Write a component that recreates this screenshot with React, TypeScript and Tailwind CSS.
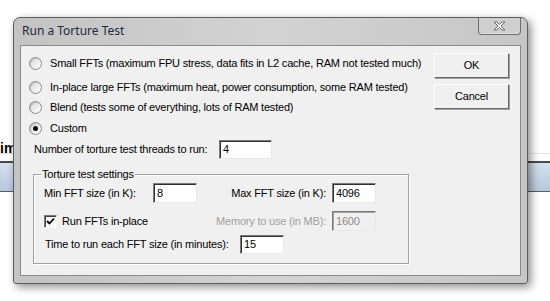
import React from "react";

const font = { fontFamily: '"Liberation Sans", Arial, sans-serif' };

const Radio: React.FC<{ checked?: boolean; label: string }> = ({ checked, label }) => (
  <label className="flex items-center h-[20px]">
    <span className="ml-[8px] w-[13px] h-[13px] rounded-full border border-[#8b8b8b] bg-gradient-to-br from-[#d9d9d9] to-white flex items-center justify-center shadow-[inset_1px_1px_1px_rgba(0,0,0,0.15)]">
      {checked && <span className="w-[5px] h-[5px] rounded-full bg-[#111]" />}
    </span>
    <span className="ml-[8px] text-[11px] text-black whitespace-nowrap">{label}</span>
  </label>
);

const Field: React.FC<{ value: string; disabled?: boolean; w?: string }> = ({ value, disabled, w }) => (
  <div
    className={`${w ?? "w-[44px]"} h-full border border-t-[#7a7a7a] border-l-[#7a7a7a] border-b-[#e8e8e8] border-r-[#e8e8e8] pl-[3px] flex items-center text-[11px] ${
      disabled ? "bg-[#f0f0f0] text-[#8c8c8c] shadow-[inset_1px_1px_0_#a0a0a0]" : "bg-white text-black shadow-[inset_1px_1px_0_#303030]"
    }`}
  >
    {value}
  </div>
);

const Button: React.FC<{ label: string }> = ({ label }) => (
  <button className="w-[75px] h-[25px] bg-[#f0f0f0] border border-t-white border-l-white border-r-[#696969] border-b-[#696969] shadow-[1px_1px_0_#a0a0a0] text-[11px] text-black flex items-center justify-center">
    {label}
  </button>
);

const CloseButton = () => (
  <div className="shrink-0 w-[43px] h-[17px] mr-[6px] rounded-b-[4px] border-x border-b border-[#6e6e6e] bg-[#cfcfcf] shadow-[inset_0_-1px_0_#e4e4e4] flex items-center justify-center">
    <svg width="13" height="10" viewBox="0 0 13 10" className="block">
      <path
        d="M1 1 H4 L6.5 3.5 L9 1 H12 L8 5 L12 9 H9 L6.5 6.5 L4 9 H1 L5 5 Z"
        fill="#f4f4f4"
        stroke="#6a6a6a"
        strokeWidth="1"
        strokeLinejoin="round"
      />
    </svg>
  </div>
);

export default function App() {
  return (
    <div className="relative w-[550px] h-[301px] bg-white overflow-hidden tracking-[-0.2px]" style={font}>
      {/* desktop content behind the dialog */}
      <div className="absolute left-0 top-[140px] text-[14px] font-bold text-black leading-[17px] tracking-normal">im</div>
      <div className="absolute left-0 right-0 top-[153px] h-[1px] bg-[#dbe5f0]" />
      <div className="absolute left-0 right-0 top-[161px] h-[31px] border-t-2 border-b border-t-[#4a4a4a] border-b-[#5c5c5c] bg-gradient-to-b from-[#d4e0ed] to-[#b7c8dc]" />

      {/* dialog window */}
      <div className="absolute left-[13px] top-[17px] w-[515px] h-[267px] rounded-t-[7px] rounded-b-[3px] border border-[#5d5d5d] bg-gradient-to-r from-[#c3c3c3] via-[#d3d3d3] to-[#c6c6c6] shadow-[3px_3px_8px_rgba(0,0,0,0.45)] flex flex-col">
        <div className="h-[27px] shrink-0 flex flex-row justify-between items-start">
          <span
            className="ml-[8px] mt-[5px] text-[12px] leading-[16px] text-[#1c2b3e] tracking-normal"
            style={{ fontFamily: '"Noto Sans", "Open Sans", sans-serif' }}
          >
            Run a Torture Test
          </span>
          <CloseButton />
        </div>

        <div className="flex-1 mx-[6px] mb-[7px] border border-[#8a8a8a] bg-[#f0f0f0] flex">
          <div className="flex-1 flex flex-col pt-[7px]">
            <Radio label="Small FFTs (maximum FPU stress, data fits in L2 cache, RAM not tested much)" />
            <div className="mt-[4px]">
              <Radio label="In-place large FFTs (maximum heat, power consumption, some RAM tested)" />
            </div>
            <Radio label="Blend (tests some of everything, lots of RAM tested)" />
            <div className="mt-[1px]">
              <Radio checked label="Custom" />
            </div>
            <div className="mt-[1px] h-[20px] flex items-center">
              <span className="ml-[13px] w-[185px] text-[11px] text-black whitespace-nowrap">
                Number of torture test threads to run:
              </span>
              <div className="h-[19px]">
                <Field value="4" w="w-[53px]" />
              </div>
            </div>

            <div className="relative mt-[15px] ml-[12px] w-[376px] h-[90px] border border-[#a0a0a0] shadow-[inset_1px_1px_0_#fff,1px_1px_0_#fff]">
              <span className="absolute left-[7px] top-[-8px] px-[1px] bg-[#f0f0f0] text-[11px] text-black leading-[14px]">
                Torture test settings
              </span>
              <div className="mt-[8px] grid grid-cols-[10px_109px_44px_135px_44px] grid-rows-[20px_20px] gap-y-[8px] text-[11px] text-black">
                <div />
                <div className="flex items-center whitespace-nowrap">Min FFT size (in K):</div>
                <Field value="8" />
                <div className="flex items-center justify-end pr-[6px] whitespace-nowrap">Max FFT size (in K):</div>
                <Field value="4096" />

                <div />
                <div className="col-span-2 flex items-center whitespace-nowrap">
                  <span className="w-[13px] h-[13px] bg-white border border-t-[#7a7a7a] border-l-[#7a7a7a] border-b-[#f4f4f4] border-r-[#f4f4f4] shadow-[inset_1px_1px_0_#404040] flex items-center justify-center">
                    <svg width="9" height="9" viewBox="0 0 9 9">
                      <path d="M1 4 L3.5 6.5 L8 1.5" fill="none" stroke="#000" strokeWidth="1.8" />
                    </svg>
                  </span>
                  <span className="ml-[5px]">Run FFTs in-place</span>
                </div>
                <div className="flex items-center justify-end pr-[6px] whitespace-nowrap text-[#a0a0a0]">
                  Memory to use (in MB):
                </div>
                <Field value="1600" disabled />
              </div>
              <div className="mt-[4px] h-[19px] flex items-center text-[11px] text-black">
                <span className="ml-[11px] w-[195px] whitespace-nowrap">Time to run each FFT size (in minutes):</span>
                <Field value="15" />
              </div>
            </div>
          </div>

          <div className="w-[75px] mr-[11px] pt-[7px] flex flex-col gap-[6px]">
            <Button label="OK" />
            <Button label="Cancel" />
          </div>
        </div>
      </div>
    </div>
  );
}
